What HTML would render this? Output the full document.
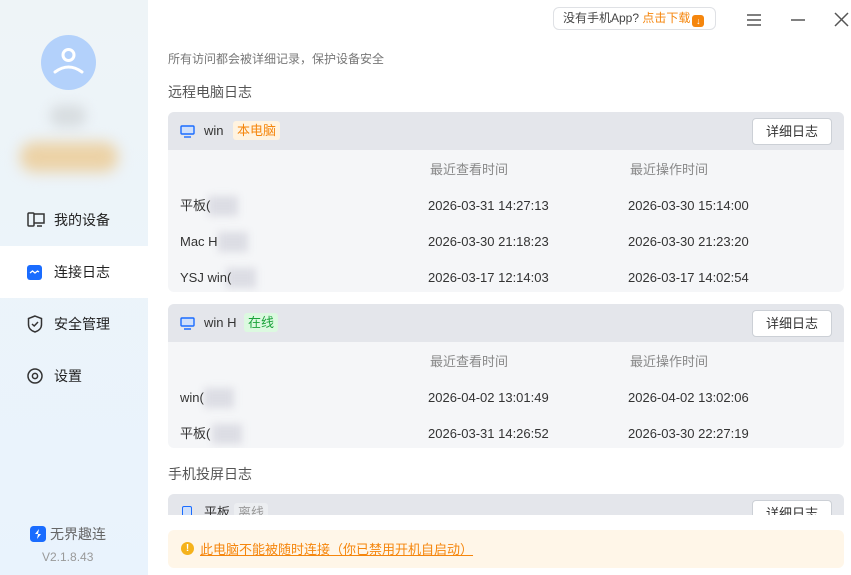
<!DOCTYPE html><html><head><meta charset="utf-8"><style>
*{margin:0;padding:0;box-sizing:border-box}
body{width:851px;height:575px;overflow:hidden;font-family:"Liberation Sans","Noto Sans CJK SC",sans-serif;font-size:13px;line-height:18px;color:#333;background:#fff;position:relative}
.side{position:absolute;left:0;top:0;width:148px;height:575px;background:linear-gradient(#eef4f7,#e9f3fd)}
.av{position:absolute;left:41px;top:35px;width:55px;height:55px;border-radius:50%;background:#b3d1fb}
.blur1{position:absolute;left:50px;top:105px;width:36px;height:22px;background:#d8dde0;filter:blur(6px);border-radius:10px}
.blur2{position:absolute;left:20px;top:142px;width:98px;height:30px;background:#ecd2a6;filter:blur(7px);border-radius:14px}
.nav{position:absolute;left:0;width:148px;height:52px;display:flex;align-items:center;padding-left:27px;font-size:14px;color:#222}
.nav .ic{width:18px;margin-right:9px;display:flex;align-items:center}
.act{background:#fff}
.t{position:absolute;white-space:nowrap;line-height:18px}
.card{position:absolute;left:168px;width:676px;background:#f5f6f8;border-radius:6px;overflow:hidden}
.ch{height:38px;background:#e4e6eb;position:relative}
.btn{position:absolute;right:12px;top:6px;width:80px;height:27px;background:#fff;border:1px solid #ccd0d6;border-radius:4px;text-align:center;line-height:25px;font-size:13px}
.tag{display:inline-block;padding:0 4px;border-radius:3px;line-height:19px;font-size:13px}
.bl{position:absolute;width:30px;height:20px;background:#dcdde4;filter:blur(4px)}
</style></head><body>
<div class="side">
<div class="av"><svg width="55" height="55" viewBox="0 0 55 55"><circle cx="27.5" cy="20" r="5.5" fill="none" stroke="#fff" stroke-width="3"/><path d="M14 37 Q27.5 27 41 37" fill="none" stroke="#fff" stroke-width="3" stroke-linecap="round"/></svg></div>
<div class="blur1"></div><div class="blur2"></div>
<div class="nav" style="top:194px"><span class="ic"><svg width="18" height="16" viewBox="0 0 18 16"><rect x="1" y="1" width="6" height="13" rx="1" fill="none" stroke="#333" stroke-width="1.5"/><path d="M7 2h10v9H7M10 14h5" fill="none" stroke="#333" stroke-width="1.5"/></svg></span>我的设备</div>
<div class="nav act" style="top:246px"><span class="ic"><svg width="15" height="15" viewBox="0 0 15 15"><rect width="15" height="15" rx="3" fill="#1a6cff"/><path d="M3 8l2.5-2 2.5 2 2.5-2 1.5 1" fill="none" stroke="#fff" stroke-width="1.3"/></svg></span>连接日志</div>
<div class="nav" style="top:298px"><span class="ic"><svg width="16" height="18" viewBox="0 0 16 18"><path d="M8 1L1.5 3.5v6c0 4 3 6.5 6.5 7.5 3.5-1 6.5-3.5 6.5-7.5v-6z" fill="none" stroke="#333" stroke-width="1.5"/><path d="M5 9l2.2 2L11 7" fill="none" stroke="#333" stroke-width="1.5"/></svg></span>安全管理</div>
<div class="nav" style="top:350px"><span class="ic"><svg width="16" height="16" viewBox="0 0 16 16"><circle cx="8" cy="8" r="7" fill="none" stroke="#333" stroke-width="1.5"/><circle cx="8" cy="8" r="2.6" fill="none" stroke="#333" stroke-width="1.5"/></svg></span>设置</div>
<div class="t" style="left:30px;top:525px;font-size:14px;color:#666;display:flex;align-items:center"><svg width="16" height="16" viewBox="0 0 16 16" style="margin-right:4px"><rect width="16" height="16" rx="3.5" fill="#1a6cff"/><path d="M9 3L5 8h3l-1 5 4-5H8z" fill="#fff"/></svg>无界趣连</div>
<div class="t" style="left:42px;top:548px;font-size:12px;color:#999">V2.1.8.43</div>
</div>
<div class="t" style="left:553px;top:7px;width:163px;height:23px;border:1px solid #dfe1e5;border-radius:6px;font-size:12px;line-height:21px;padding-left:9px;color:#444">没有手机App? <span style="color:#f5860d">点击下载</span><span style="display:inline-block;width:12px;height:12px;background:#f5860d;border-radius:3px;vertical-align:-2px;margin-left:2px;color:#fff;font-size:9px;line-height:12px;text-align:center">↓</span></div>
<svg class="t" style="left:746px;top:13px" width="16" height="14"><path d="M1 2h14M1 7h14M1 12h14" stroke="#555" stroke-width="1.5"/></svg>
<svg class="t" style="left:790px;top:13px" width="16" height="14"><path d="M1 7h14" stroke="#555" stroke-width="1.5"/></svg>
<svg class="t" style="left:834px;top:12px" width="15" height="15"><path d="M1 1l13 13M14 1L1 14" stroke="#555" stroke-width="1.5"/></svg>
<div class="t" style="left:168px;top:50px;font-size:12px;color:#777">所有访问都会被详细记录，保护设备安全</div>
<div class="t" style="left:168px;top:83px;font-size:14px;color:#555">远程电脑日志</div>
<div class="card" style="top:112px;height:180px">
<div class="ch"><svg class="t" style="left:12px;top:13px" width="15" height="13"><rect x="1" y="1" width="13" height="8" rx="1" fill="#cfe0fb" stroke="#1a6cff" stroke-width="1.4"/><path d="M4 12h7" stroke="#1a6cff" stroke-width="1.4"/></svg><span class="t" style="left:36px;top:10px">win</span><span class="t tag" style="left:65px;top:9px;background:#fff3e0;color:#f5860d">本电脑</span><div class="btn">详细日志</div></div>
<div class="t" style="left:262px;top:49px;color:#888">最近查看时间</div><div class="t" style="left:462px;top:49px;color:#888">最近操作时间</div>
<div class="bl" style="left:40px;top:84px"></div><div class="bl" style="left:50px;top:120px"></div><div class="bl" style="left:58px;top:156px"></div>
<div class="t" style="left:12px;top:85px">平板(</div><div class="t" style="left:260px;top:85px">2026-03-31 14:27:13</div><div class="t" style="left:460px;top:85px">2026-03-30 15:14:00</div>
<div class="t" style="left:12px;top:121px">Mac H</div><div class="t" style="left:260px;top:121px">2026-03-30 21:18:23</div><div class="t" style="left:460px;top:121px">2026-03-30 21:23:20</div>
<div class="t" style="left:12px;top:157px">YSJ win(</div><div class="t" style="left:260px;top:157px">2026-03-17 12:14:03</div><div class="t" style="left:460px;top:157px">2026-03-17 14:02:54</div>
</div>
<div class="card" style="top:304px;height:144px">
<div class="ch"><svg class="t" style="left:12px;top:13px" width="15" height="13"><rect x="1" y="1" width="13" height="8" rx="1" fill="#cfe0fb" stroke="#1a6cff" stroke-width="1.4"/><path d="M4 12h7" stroke="#1a6cff" stroke-width="1.4"/></svg><span class="t" style="left:36px;top:10px">win H</span><span class="t tag" style="left:76px;top:9px;background:#dcf9e0;color:#1aa33a">在线</span><div class="btn">详细日志</div></div>
<div class="t" style="left:262px;top:49px;color:#888">最近查看时间</div><div class="t" style="left:462px;top:49px;color:#888">最近操作时间</div>
<div class="bl" style="left:36px;top:84px"></div><div class="bl" style="left:44px;top:120px"></div>
<div class="t" style="left:12px;top:85px">win(</div><div class="t" style="left:260px;top:85px">2026-04-02 13:01:49</div><div class="t" style="left:460px;top:85px">2026-04-02 13:02:06</div>
<div class="t" style="left:12px;top:121px">平板(</div><div class="t" style="left:260px;top:121px">2026-03-31 14:26:52</div><div class="t" style="left:460px;top:121px">2026-03-30 22:27:19</div>
</div>
<div class="t" style="left:168px;top:465px;font-size:14px;color:#555">手机投屏日志</div>
<div class="card" style="top:494px;height:21px;border-radius:6px 6px 0 0">
<div class="ch"><span class="t" style="left:14px;top:12px;width:10px;height:12px;border:1.5px solid #1a6cff;border-radius:2px;background:#cfe0fb"></span><span class="t" style="left:36px;top:10px">平板</span><span class="t tag" style="left:66px;top:9px;background:#eceef1;color:#999">离线</span><div class="btn">详细日志</div></div>
</div>
<div class="t" style="left:168px;top:530px;width:676px;height:38px;background:#fff6e8;border-radius:6px"><span class="t" style="left:13px;top:12px;width:13px;height:13px;border-radius:50%;background:#f5b21b;color:#fff;font-size:10px;font-weight:bold;text-align:center;line-height:13px">!</span><span class="t" style="left:32px;top:11px;color:#f5860d;text-decoration:underline">此电脑不能被随时连接（你已禁用开机自启动）</span></div>
</body></html>
